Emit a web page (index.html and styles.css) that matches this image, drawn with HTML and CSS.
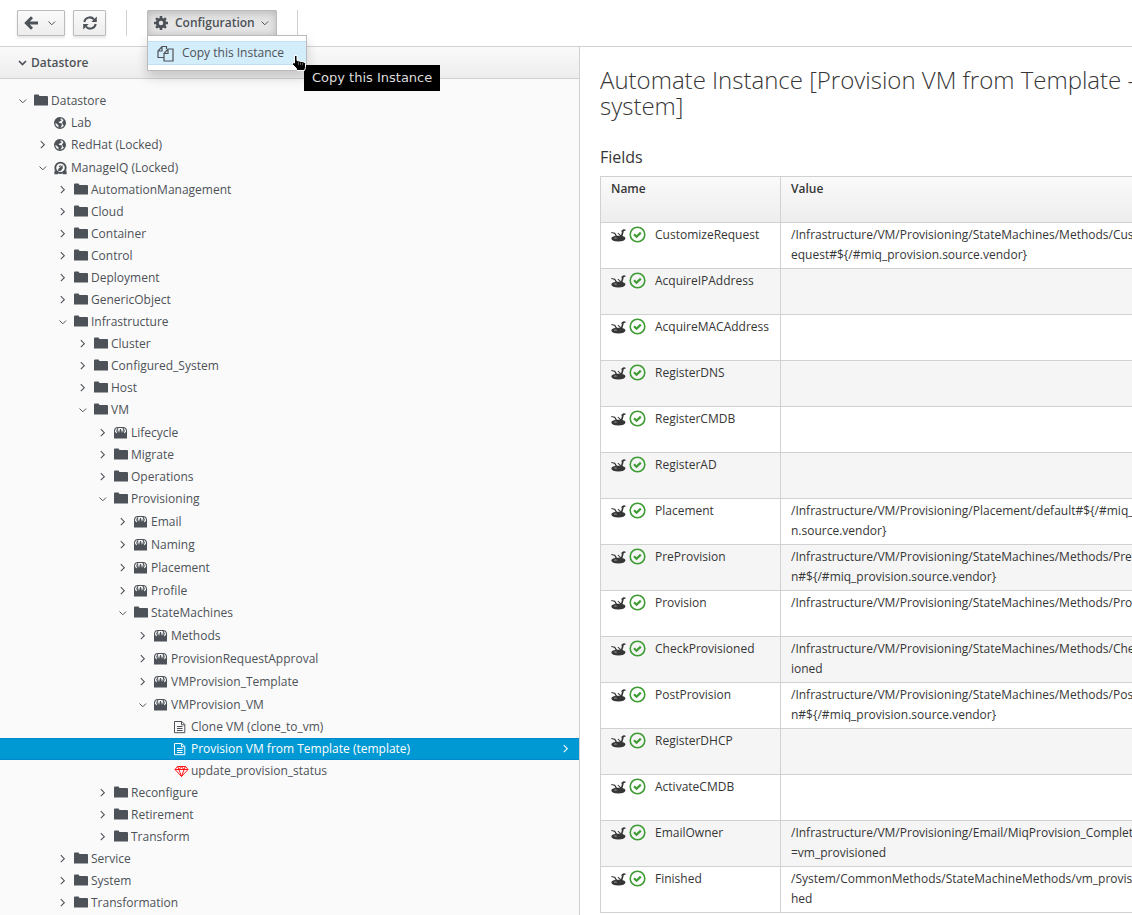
FILE: index.html
```html
<!DOCTYPE html>
<html lang="en">
<head>
<meta charset="utf-8">
<meta name="viewport" content="width=device-width, initial-scale=1">
<title>Automate Datastore</title>
<link rel="stylesheet" href="styles.css">
</head>
<body>
<svg class="sprite" aria-hidden="true">
  <symbol id="down" viewBox="0 0 17 14"><path d="M5.500 5.500l3.300 3.300 3.300-3.300" fill="none" stroke="currentColor"/></symbol>
  <symbol id="right" viewBox="0 0 17 14"><path d="M6.800 3.200l3.500 3.500-3.500 3.500" fill="none" stroke="currentColor" stroke-width="1.100"/></symbol>
  <symbol id="folder" viewBox="0 0 14 14"><path d="M0 1.500Q0 .500 1 .500h3.500L5.500 2H13q1 0 1 1v8.500H0z" fill="currentColor"/></symbol>
  <symbol id="globe" viewBox="0 0 14 14"><circle cx="6" cy="7" r="5.300" fill="none" stroke="currentColor" stroke-width="1.300"/><path d="M1 4.500L3.500 1.700l3.500.300-.800 1.300L8 4 6.300 5.300 4.500 6l1 1 2.500.500-.300 2L6 12.500 4.500 11.500 4.500 9.500 2.500 7.500.600 7zM8.500 2L11 4.500l.600 3-1.300 2.500L8.800 8.500 8 6.300l1.500-1.500z" fill="currentColor"/></symbol>
  <symbol id="miq" viewBox="0 0 14 14"><circle cx="6.500" cy="6.800" r="5.200" fill="none" stroke="currentColor" stroke-width="1.900"/><path d="M.500 9.500L4 11.500v1.700H.300zM12.500 9.500L9 11.500v1.700h3.700zM4.200 10V8l4.500-4v3.500L6.500 10zM4.500 5.500l2-1.500.5 1-1.500 1.300z" fill="currentColor"/></symbol>
  <symbol id="class" viewBox="0 0 14 14"><path d="M0 12.500V7.500L1.500 6l1 1.500L4 3.500 5 7l1-4h1l1 4 1-3.500 1.500 4 1-1.500L13 7.500v5z" fill="currentColor"/><path d="M.500 8V5Q.700 1.500 4 1.500h5q3.300 0 3.500 3.500v3M2.500 5.500L4 2M10.500 5.500L9 2" fill="none" stroke="currentColor" stroke-width="1.100"/></symbol>
  <symbol id="doc" viewBox="0 0 14 14"><path d="M.500 1.500h7.300l3 3v8.200H.500zM7.500 1.500v3.300h3.300M3 6.500h5.500M3 8.500h5.500M3 10.500h5.500" fill="none" stroke="currentColor"/></symbol>
  <symbol id="gem" viewBox="0 0 15 14"><path d="M3.500 2.500h8L14 5.500l-6.500 7-6.500-7zM1 5.500h13M3.500 2.500l1.700 3L7.500 2.500l2.300 3 1.700-3M4.900 5.500l2.600 7 2.600-7" fill="none" stroke="red" stroke-width=".900"/></symbol>
  <symbol id="robot" viewBox="0 0 15 13"><path d="M.300 9.500Q.800 7.300 4.500 7L3.300 4.800.300 4V3l3.800.700L6 6.800h3L6.500 4.300l.7-.500L10 6.300 10.800 3.500l-.500-1.700L12.500.300l2 .200v1.200l-1.700.300-.3 1.500-1 3.500Q14.500 7.800 14.500 9.300 13.800 12.500 7.300 12.500T.300 9.500z" fill="currentColor"/><ellipse cx="4.500" cy="9" rx="1.500" ry=".600" fill="#aaa"/></symbol>
  <symbol id="ok" viewBox="0 0 17 17"><circle cx="8.500" cy="8.500" r="7.300" fill="none" stroke="#3f9c35" stroke-width="1.600"/><path d="M5 8.300l2.500 2.500 4.300-4.200" fill="none" stroke="#3f9c35" stroke-width="2.200"/></symbol>
</svg>

<header class="toolbar">
  <button class="btn back" aria-label="Back"><svg width="15" height="14" viewBox="0 0 15 14"><path d="M14 7H3M8 1.300L2.300 7 8 12.700" fill="none" stroke="currentColor" stroke-width="2.900"/></svg><svg class="chev"><use href="#down"/></svg></button>
  <button class="btn refresh" aria-label="Refresh"><svg width="14" height="14" viewBox="0 0 14 14"><path d="M1.300 6A5.600 5.600 0 0 1 11 3.300M12.700 8A5.600 5.600 0 0 1 3 10.700" fill="none" stroke="currentColor" stroke-width="2"/><path d="M13.800.500V6H8.300zM.200 13.500V8h5.500z" fill="currentColor"/></svg></button>
  <span class="divider"></span>
  <div class="dropdown">
    <button class="btn open" aria-expanded="true"><svg width="14" height="14" viewBox="0 0 14 14"><circle cx="7" cy="7" r="3.700" fill="none" stroke="currentColor" stroke-width="3"/><path d="M7 0v3M7 11v3M0 7h3M11 7h3M2.100 2.100l2 2M9.900 9.900l2 2M2.100 11.900l2-2M9.900 4.100l2-2" stroke="currentColor" stroke-width="2.600"/></svg><span>Configuration</span><svg class="chev"><use href="#down"/></svg></button>
    <div class="menu" role="menu">
      <button class="item" role="menuitem"><svg width="17" height="17" viewBox="0 0 17 17"><path d="M7 12.500H1V6l4-4.500h4.500V4M1 6h4V1.500M7 8.500l4-4.500h5v12H7zM7 8.500h4V4" fill="none" stroke="currentColor" stroke-width="1.200"/></svg>Copy this Instance</button>
    </div>
    <svg class="pointer" viewBox="0 0 14 16"><path d="M2.500.500h2.500v5l7 1.500 1.500 1.500v4l-1 3H5l-1-2.500-3.500-3.500v-2l2 .500z" fill="#000" stroke="#fff"/><path d="M6.500 7v3M8.500 7.500v2.500M10.500 8v2" stroke="#999" stroke-width=".600"/></svg>
    <div class="tip" role="tooltip">Copy this Instance</div>
  </div>
  <span class="divider"></span>
</header>

<div class="layout">
<aside class="sidebar">
  <h2 class="panel-head"><svg class="chev" viewBox="0 0 17 14"><path d="M5 5l3.500 3.500L12 5" fill="none" stroke="currentColor" stroke-width="1.700"/></svg>Datastore</h2>
  <ul class="tree" role="tree">
    <li class="row l0" role="treeitem"><svg class="chev"><use href="#down"/></svg><svg class="ico"><use href="#folder"/></svg>Datastore</li>
    <li class="row l1" role="treeitem"><span class="chev"></span><svg class="ico"><use href="#globe"/></svg>Lab</li>
    <li class="row l1" role="treeitem"><svg class="chev"><use href="#right"/></svg><svg class="ico"><use href="#globe"/></svg>RedHat (Locked)</li>
    <li class="row tall l1" role="treeitem"><svg class="chev"><use href="#down"/></svg><svg class="ico"><use href="#miq"/></svg>ManageIQ (Locked)</li>
    <li class="row l2" role="treeitem"><svg class="chev"><use href="#right"/></svg><svg class="ico"><use href="#folder"/></svg>AutomationManagement</li>
    <li class="row l2" role="treeitem"><svg class="chev"><use href="#right"/></svg><svg class="ico"><use href="#folder"/></svg>Cloud</li>
    <li class="row l2" role="treeitem"><svg class="chev"><use href="#right"/></svg><svg class="ico"><use href="#folder"/></svg>Container</li>
    <li class="row l2" role="treeitem"><svg class="chev"><use href="#right"/></svg><svg class="ico"><use href="#folder"/></svg>Control</li>
    <li class="row l2" role="treeitem"><svg class="chev"><use href="#right"/></svg><svg class="ico"><use href="#folder"/></svg>Deployment</li>
    <li class="row l2" role="treeitem"><svg class="chev"><use href="#right"/></svg><svg class="ico"><use href="#folder"/></svg>GenericObject</li>
    <li class="row l2" role="treeitem"><svg class="chev"><use href="#down"/></svg><svg class="ico"><use href="#folder"/></svg>Infrastructure</li>
    <li class="row l3" role="treeitem"><svg class="chev"><use href="#right"/></svg><svg class="ico"><use href="#folder"/></svg>Cluster</li>
    <li class="row l3" role="treeitem"><svg class="chev"><use href="#right"/></svg><svg class="ico"><use href="#folder"/></svg>Configured_System</li>
    <li class="row l3" role="treeitem"><svg class="chev"><use href="#right"/></svg><svg class="ico"><use href="#folder"/></svg>Host</li>
    <li class="row l3" role="treeitem"><svg class="chev"><use href="#down"/></svg><svg class="ico"><use href="#folder"/></svg>VM</li>
    <li class="row tall l4" role="treeitem"><svg class="chev"><use href="#right"/></svg><svg class="ico"><use href="#class"/></svg>Lifecycle</li>
    <li class="row l4" role="treeitem"><svg class="chev"><use href="#right"/></svg><svg class="ico"><use href="#folder"/></svg>Migrate</li>
    <li class="row l4" role="treeitem"><svg class="chev"><use href="#right"/></svg><svg class="ico"><use href="#folder"/></svg>Operations</li>
    <li class="row l4" role="treeitem"><svg class="chev"><use href="#down"/></svg><svg class="ico"><use href="#folder"/></svg>Provisioning</li>
    <li class="row tall l5" role="treeitem"><svg class="chev"><use href="#right"/></svg><svg class="ico"><use href="#class"/></svg>Email</li>
    <li class="row tall l5" role="treeitem"><svg class="chev"><use href="#right"/></svg><svg class="ico"><use href="#class"/></svg>Naming</li>
    <li class="row tall l5" role="treeitem"><svg class="chev"><use href="#right"/></svg><svg class="ico"><use href="#class"/></svg>Placement</li>
    <li class="row tall l5" role="treeitem"><svg class="chev"><use href="#right"/></svg><svg class="ico"><use href="#class"/></svg>Profile</li>
    <li class="row l5" role="treeitem"><svg class="chev"><use href="#down"/></svg><svg class="ico"><use href="#folder"/></svg>StateMachines</li>
    <li class="row tall l6" role="treeitem"><svg class="chev"><use href="#right"/></svg><svg class="ico"><use href="#class"/></svg>Methods</li>
    <li class="row tall l6" role="treeitem"><svg class="chev"><use href="#right"/></svg><svg class="ico"><use href="#class"/></svg>ProvisionRequestApproval</li>
    <li class="row tall l6" role="treeitem"><svg class="chev"><use href="#right"/></svg><svg class="ico"><use href="#class"/></svg>VMProvision_Template</li>
    <li class="row tall l6" role="treeitem"><svg class="chev"><use href="#down"/></svg><svg class="ico"><use href="#class"/></svg>VMProvision_VM</li>
    <li class="row l7" role="treeitem"><span class="chev"></span><svg class="ico"><use href="#doc"/></svg>Clone VM (clone_to_vm)</li>
    <li class="row l7 selected" role="treeitem" aria-selected="true"><span class="chev"></span><svg class="ico"><use href="#doc"/></svg>Provision VM from Template (template)<svg class="chev end"><use href="#right"/></svg></li>
    <li class="row l7" role="treeitem"><span class="chev"></span><svg class="ico gem"><use href="#gem"/></svg>update_provision_status</li>
    <li class="row l4" role="treeitem"><svg class="chev"><use href="#right"/></svg><svg class="ico"><use href="#folder"/></svg>Reconfigure</li>
    <li class="row l4" role="treeitem"><svg class="chev"><use href="#right"/></svg><svg class="ico"><use href="#folder"/></svg>Retirement</li>
    <li class="row l4" role="treeitem"><svg class="chev"><use href="#right"/></svg><svg class="ico"><use href="#folder"/></svg>Transform</li>
    <li class="row l2" role="treeitem"><svg class="chev"><use href="#right"/></svg><svg class="ico"><use href="#folder"/></svg>Service</li>
    <li class="row l2" role="treeitem"><svg class="chev"><use href="#right"/></svg><svg class="ico"><use href="#folder"/></svg>System</li>
    <li class="row l2" role="treeitem"><svg class="chev"><use href="#right"/></svg><svg class="ico"><use href="#folder"/></svg>Transformation</li>
  </ul>
</aside>

<main class="main">
  <h1>Automate Instance [Provision VM from Template -<br>system]</h1>
  <h3>Fields</h3>
  <table class="fields">
    <thead><tr><th class="name">Name</th><th class="value">Value</th></tr></thead>
    <tbody>
      <tr><td><div class="field"><svg class="robot"><use href="#robot"/></svg><svg class="ok"><use href="#ok"/></svg>CustomizeRequest</div></td><td>/Infrastructure/VM/Provisioning/StateMachines/Methods/CustomizeR<br>equest#${/#miq_provision.source.vendor}</td></tr>
      <tr><td><div class="field"><svg class="robot"><use href="#robot"/></svg><svg class="ok"><use href="#ok"/></svg>AcquireIPAddress</div></td><td></td></tr>
      <tr><td><div class="field"><svg class="robot"><use href="#robot"/></svg><svg class="ok"><use href="#ok"/></svg>AcquireMACAddress</div></td><td></td></tr>
      <tr><td><div class="field"><svg class="robot"><use href="#robot"/></svg><svg class="ok"><use href="#ok"/></svg>RegisterDNS</div></td><td></td></tr>
      <tr><td><div class="field"><svg class="robot"><use href="#robot"/></svg><svg class="ok"><use href="#ok"/></svg>RegisterCMDB</div></td><td></td></tr>
      <tr><td><div class="field"><svg class="robot"><use href="#robot"/></svg><svg class="ok"><use href="#ok"/></svg>RegisterAD</div></td><td></td></tr>
      <tr><td><div class="field"><svg class="robot"><use href="#robot"/></svg><svg class="ok"><use href="#ok"/></svg>Placement</div></td><td>/Infrastructure/VM/Provisioning/Placement/default#${/#miq_provisio<br>n.source.vendor}</td></tr>
      <tr><td><div class="field"><svg class="robot"><use href="#robot"/></svg><svg class="ok"><use href="#ok"/></svg>PreProvision</div></td><td>/Infrastructure/VM/Provisioning/StateMachines/Methods/PreProvisio<br>n#${/#miq_provision.source.vendor}</td></tr>
      <tr><td><div class="field"><svg class="robot"><use href="#robot"/></svg><svg class="ok"><use href="#ok"/></svg>Provision</div></td><td>/Infrastructure/VM/Provisioning/StateMachines/Methods/Provision</td></tr>
      <tr><td><div class="field"><svg class="robot"><use href="#robot"/></svg><svg class="ok"><use href="#ok"/></svg>CheckProvisioned</div></td><td>/Infrastructure/VM/Provisioning/StateMachines/Methods/CheckProvis<br>ioned</td></tr>
      <tr><td><div class="field"><svg class="robot"><use href="#robot"/></svg><svg class="ok"><use href="#ok"/></svg>PostProvision</div></td><td>/Infrastructure/VM/Provisioning/StateMachines/Methods/PostProvisio<br>n#${/#miq_provision.source.vendor}</td></tr>
      <tr><td><div class="field"><svg class="robot"><use href="#robot"/></svg><svg class="ok"><use href="#ok"/></svg>RegisterDHCP</div></td><td></td></tr>
      <tr><td><div class="field"><svg class="robot"><use href="#robot"/></svg><svg class="ok"><use href="#ok"/></svg>ActivateCMDB</div></td><td></td></tr>
      <tr><td><div class="field"><svg class="robot"><use href="#robot"/></svg><svg class="ok"><use href="#ok"/></svg>EmailOwner</div></td><td>/Infrastructure/VM/Provisioning/Email/MiqProvision_Complete?event<br>=vm_provisioned</td></tr>
      <tr><td><div class="field"><svg class="robot"><use href="#robot"/></svg><svg class="ok"><use href="#ok"/></svg>Finished</div></td><td>/System/CommonMethods/StateMachineMethods/vm_provision_finis<br>hed</td></tr>
    </tbody>
  </table>
</main>
</div>
</body>
</html>
```

FILE: styles.css
```css
* { box-sizing: border-box; }

body {
  margin: 0;
  min-height: 100vh;
  display: flex;
  flex-direction: column;
  background: #fff;
  color: #363636;
  font: 12px/20px "Open Sans", "Noto Sans", sans-serif;
}

svg { flex: none; }
.sprite { display: none; }

.toolbar {
  display: flex;
  align-items: center;
  height: 46px;
  padding: 0 17px;
  color: #4d5258;
}

.btn {
  display: flex;
  align-items: center;
  height: 26px;
  border: 1px solid #bbb;
  border-radius: 1px;
  padding: 0 6px;
  background: linear-gradient(#fafafa, #ededed);
  box-shadow: 0 2px 3px rgba(3, 3, 3, 0.1);
  color: inherit;
  font: 600 12px/20px "Open Sans", "Noto Sans", sans-serif;
}

.back { gap: 4px; padding-right: 4px; margin-right: 8px; }
.refresh { width: 33px; justify-content: center; margin-right: 20px; }
.open { gap: 7px; padding: 0 3px 0 6px; background: #e5e5e5; box-shadow: inset 0 2px 8px rgba(3, 3, 3, 0.2); }
.open .chev { margin-left: -6px; }
.divider { width: 1px; height: 26px; background: #d1d1d1; }
.dropdown { position: relative; margin: 0 20px; }
.chev { width: 17px; height: 14px; flex: none; }

.menu {
  position: absolute;
  z-index: 2;
  top: 25px;
  left: 0;
  width: 160px;
  padding: 5px 0;
  border: 1px solid #bbb;
  background: #fff;
  box-shadow: 0 6px 12px rgba(0, 0, 0, 0.18);
}

.item {
  display: flex;
  align-items: center;
  gap: 8px;
  width: 100%;
  height: 24px;
  padding: 0 9px;
  border: solid #bee1f4;
  border-width: 1px 0;
  background: #d4edfa;
  color: #4d5258;
  font: 12px/20px "Open Sans", "Noto Sans", sans-serif;
}

.pointer { position: absolute; z-index: 5; top: 45px; left: 145px; width: 14px; height: 16px; }

.tip {
  position: absolute;
  z-index: 4;
  top: 55px;
  left: 157px;
  padding: 3px 8px;
  background: #000;
  color: #ddd;
  font: 13px/20px "DejaVu Sans", sans-serif;
  white-space: nowrap;
}

.layout {
  flex: 1;
  display: grid;
  grid-template-columns: minmax(0, 580fr) minmax(0, 552fr);
  border-top: 1px solid #d1d1d1;
}

.sidebar { border-right: 1px solid #d1d1d1; background: #fafafa; color: #4d5258; }

.panel-head {
  display: flex;
  align-items: center;
  height: 32px;
  margin: 0;
  padding-left: 14px;
  border-bottom: 1px solid #d1d1d1;
  background: linear-gradient(#fafafa, #ededed);
  font-size: 12px;
  font-weight: 600;
}

.tree { margin: 0; padding: 11px 0 0; list-style: none; }
.row { display: flex; align-items: center; height: 22px; white-space: nowrap; }
.tall { height: 23px; padding-top: 1px; }
.row .chev { margin-right: 3px; }
.ico { width: 14px; height: 14px; margin-right: 3px; }
.gem { width: 15px; margin-right: 2px; }
.l0 { padding-left: 14px; }
.l1 { padding-left: 34px; }
.l2 { padding-left: 54px; }
.l3 { padding-left: 74px; }
.l4 { padding-left: 94px; }
.l5 { padding-left: 114px; }
.l6 { padding-left: 134px; }
.l7 { padding-left: 154px; }
.selected { background: #0099d3; border: solid #0088ce; border-width: 1px 0; color: #fff; }
.row .end { margin-left: auto; margin-right: 5px; }

.main { overflow: hidden; padding: 20px 0 0 20px; }

h1 { margin: 0; font-size: 24px; font-weight: 300; line-height: 26px; white-space: nowrap; }
h3 { margin: 28px 0 9px; font-size: 16px; font-weight: 400; line-height: 20px; }

.fields { width: 100%; border-collapse: collapse; }
.fields th, .fields td {
  height: 46px;
  padding: 2px 10px 3px;
  border: 1px solid #d1d1d1;
  text-align: left;
  vertical-align: top;
  white-space: nowrap;
}
.fields thead { background: linear-gradient(#fafafa, #ededed); }
.fields th { font-weight: 600; }
.name { width: 180px; min-width: 180px; }
.value { min-width: 440px; }
.fields tbody tr:nth-child(even) { background: #f5f5f5; }
.field { display: flex; align-items: center; }
.robot { width: 15px; height: 13px; margin-right: 3px; }
.ok { width: 17px; height: 17px; margin-right: 9px; margin-bottom: 2px; }
```
